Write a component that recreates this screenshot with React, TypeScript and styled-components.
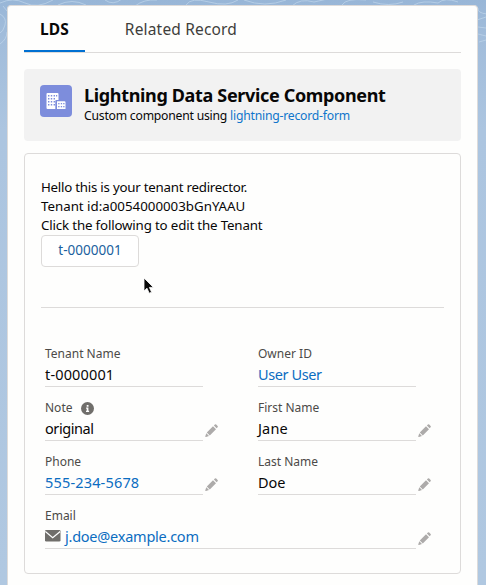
import React from 'react';
import styled, { createGlobalStyle } from 'styled-components';

const GlobalStyle = createGlobalStyle`
  * { box-sizing: border-box; }
  body { margin: 0; font-family: "Noto Sans", "Open Sans", sans-serif; color: #080707; overflow: hidden; }
`;

const Page = styled.div`
  position: relative;
  width: 486px;
  height: 585px;
  padding: 5px 8px 0 7px;
  background: linear-gradient(#98b6d7 0, #a2bddb 40px, #acc5e0 130px, #b0c8e1 100%);
`;

const Contours = styled.svg`
  position: absolute;
  left: 0;
  top: 0;
`;

const Panel = styled.main`
  position: relative;
  height: 580px;
  padding: 0 16px;
  border: 1px solid #dddbda;
  border-bottom: 0;
  border-radius: 4px 4px 0 0;
  background: #fefefd;
`;

const TabBar = styled.nav`
  display: flex;
  height: 47px;
  border-bottom: 1px solid #dddbda;
`;

const Tab = styled.div<{ $active?: boolean; $spacing: number }>`
  height: 46px;
  padding: 3px 16px 0;
  margin-right: 24px;
  line-height: 40px;
  font-size: 15.5px;
  font-weight: ${(p) => (p.$active ? 700 : 400)};
  letter-spacing: ${(p) => p.$spacing}px;
  color: ${(p) => (p.$active ? '#080707' : '#3e3e3c')};
  border-bottom: ${(p) => (p.$active ? '2px solid #0070d2' : '0')};
  white-space: nowrap;
`;

const Header = styled.header`
  display: flex;
  height: 72px;
  margin-top: 16px;
  padding: 16px;
  border-radius: 4px;
  background: #f2f2f2;
`;

const AppIcon = styled.div`
  width: 32px;
  height: 32px;
  margin-right: 12px;
  border-radius: 4px;
  background: #7d8ddc;
`;

const Title = styled.h1`
  margin: -1px 0 0;
  font-size: 18px;
  line-height: 22px;
  font-weight: 700;
  letter-spacing: -0.34px;
  white-space: nowrap;
`;

const Subtitle = styled.p`
  margin: 1px 0 0;
  font-size: 12.2px;
  line-height: 18px;
  letter-spacing: -0.22px;
  white-space: nowrap;
`;

const Link = styled.a`
  color: #0f75cb;
`;

const Card = styled.section`
  height: 421px;
  margin-top: 12px;
  padding: 24px 16px 0;
  border: 1px solid #dddbda;
  border-radius: 4px;
`;

const Intro = styled.p<{ $spacing: number }>`
  margin: 0;
  font-size: 13.3px;
  line-height: 19px;
  letter-spacing: ${(p) => p.$spacing}px;
  white-space: nowrap;
`;

const Button = styled.button`
  display: block;
  width: 98px;
  height: 32px;
  padding: 0;
  border: 1px solid #dddbda;
  border-radius: 4px;
  background: #fff;
  color: #1b5f9e;
  font: 13.5px/28px "Noto Sans", sans-serif;
  padding-bottom: 2px;
`;

const Divider = styled.hr`
  height: 1px;
  margin: 40px 0 0;
  border: 0;
  background: #dddbda;
`;

const Fields = styled.div`
  display: grid;
  grid-template-columns: 174px 174px;
  column-gap: 39px;
  grid-auto-rows: 54px;
  padding: 37px 0 0 4px;
`;

const FieldBox = styled.div<{ $wide?: boolean }>`
  display: flex;
  height: 42px;
  ${(p) => p.$wide && 'grid-column: 1 / -1;'}
`;

const FieldBody = styled.div`
  flex: 1;
  border-bottom: 1px solid #dddbda;
`;

const Label = styled.div`
  display: flex;
  align-items: center;
  gap: 9px;
  height: 18px;
  font-size: 12px;
  line-height: 16px;
  color: #4c4a48;
`;

const Value = styled.div<{ $link?: boolean; $spacing?: number }>`
  display: flex;
  align-items: center;
  gap: 4px;
  height: 22px;
  font-size: 14.5px;
  line-height: 22px;
  letter-spacing: ${(p) => p.$spacing ?? 0}px;
  color: ${(p) => (p.$link ? '#0b6dc1' : '#080707')};
`;

const EditSlot = styled.div`
  width: 16px;
  padding: 25px 0 0 2px;
`;

const EditIcon = styled.svg`
  display: block;
`;

const Cursor = styled.svg`
  position: absolute;
  left: 135px;
  top: 271px;
`;

const Building = () => (
  <svg width="32" height="32" viewBox="0 0 32 32">
    <path fill="#fff" fillRule="evenodd" d="M7.5 8h10q1 0 1 1v6h-2.2q-1 0-1 1v8H7.5q-1 0-1-1V9q0-1 1-1zM17 16.2h7.5q1 0 1 1V24H17z" />
    <g fill="#7d8ddc">
      {[10, 13, 16, 19].map((y) => [8, 10.8, 13.6].map((x) => <rect key={`${x}-${y}`} x={x} y={y} width="1.4" height="1.5" />))}
      <rect x="16" y="10" width="1.2" height="1.5" />
      {[18, 21].map((y) => [18.2, 20.8, 23.2].map((x) => <rect key={`${x}-${y}`} x={x} y={y} width="1.3" height="1.3" />))}
    </g>
  </svg>
);

const Pencil = () => (
  <EditIcon width="13" height="14" viewBox="0 0 13 14" fill="#adabaa">
    <path d="M1.8 8.4 8 2.3 11 5.3 4.8 11.4zM8.9 1.5 9.9.5q.7-.6 1.3 0l1.4 1.4q.6.6 0 1.3l-1 1zM1.3 9.2 4 11.9 1 12.9Q.1 13.2.3 12.3z" />
  </EditIcon>
);

const Info = () => (
  <svg width="13" height="13" viewBox="0 0 13 13">
    <circle cx="6.5" cy="6.5" r="6.5" fill="#706e6b" />
    <path fill="#fff" d="M5.7 3.1h1.8v1.7H5.7zM5.1 5.6h2.3v3.2h.7v1.1H5v-1.1h.7V6.7h-.6z" />
  </svg>
);

const Mail = () => (
  <svg width="16" height="12" viewBox="0 0 16 12">
    <rect width="15.5" height="11.5" rx="1.3" fill="#706e6b" />
    <path d="M.3 1.4 7.7 7.7 15.2 1.4" fill="none" stroke="#fff" strokeWidth="1.3" />
  </svg>
);

type FieldProps = {
  label: string;
  value: string;
  spacing?: number;
  link?: boolean;
  editable?: boolean;
  wide?: boolean;
  info?: boolean;
  mail?: boolean;
};

const Field = ({ label, value, spacing, link, editable, wide, info, mail }: FieldProps) => (
  <FieldBox $wide={wide}>
    <FieldBody>
      <Label>{label}{info && <Info />}</Label>
      <Value $link={link} $spacing={spacing}>{mail && <Mail />}{value}</Value>
    </FieldBody>
    <EditSlot>{editable && <Pencil />}</EditSlot>
  </FieldBox>
);

export default function App() {
  return (
    <Page>
      <GlobalStyle />
      <Contours width="486" height="60" fill="none" stroke="#c3d8ed" strokeOpacity=".65">
        <path d="M0 3q13-6 25 0t28-3M58 5q14-7 28 0M105 0q8 6 17-1M135 6q9-7 22-6M186 5q5-8 23-3t29-2M244 0q21 8 42 0M292 6q8-8 22-4l18-4M342 5q4-7 24-5M373 2q16 5 30 0M414 5q8-5 24-2 7-6 20-1M478 8q-1 5 9 6M477 20l9-3M478 27l8 1M478 34l8 2M479 42l7-2M0 14q7 4 5 11T0 33M0 44q7-5 7-12M3 6l4 5" />
      </Contours>
      <Panel>
        <TabBar>
          <Tab $active $spacing={0.1}>LDS</Tab>
          <Tab $spacing={0.17}>Related Record</Tab>
        </TabBar>
        <Header>
          <AppIcon><Building /></AppIcon>
          <div>
            <Title>Lightning Data Service Component</Title>
            <Subtitle>Custom component using <Link>lightning-record-form</Link></Subtitle>
          </div>
        </Header>
        <Card>
          <Intro $spacing={-0.24}>Hello this is your tenant redirector.</Intro>
          <Intro $spacing={0}>Tenant id:a0054000003bGnYAAU</Intro>
          <Intro $spacing={-0.16}>Click the following to edit the Tenant</Intro>
          <Button>t-0000001</Button>
          <Divider />
          <Fields>
            <Field label="Tenant Name" value="t-0000001" spacing={0.15} />
            <Field label="Owner ID" value="User User" spacing={-0.4} link />
            <Field label="Note" value="original" spacing={-0.42} info editable />
            <Field label="First Name" value="Jane" spacing={0.15} editable />
            <Field label="Phone" value="555-234-5678" spacing={0.17} link editable />
            <Field label="Last Name" value="Doe" editable />
            <Field label="Email" value="j.doe@example.com" spacing={-0.24} link mail wide editable />
          </Fields>
        </Card>
        <Cursor width="14" height="20" viewBox="0 0 14 20">
          <path d="M1 1v13l3-2.8 2.2 5 2.4-1-2.2-4.8h4z" fill="#080808" stroke="#fff" strokeWidth=".8" />
        </Cursor>
      </Panel>
    </Page>
  );
}
